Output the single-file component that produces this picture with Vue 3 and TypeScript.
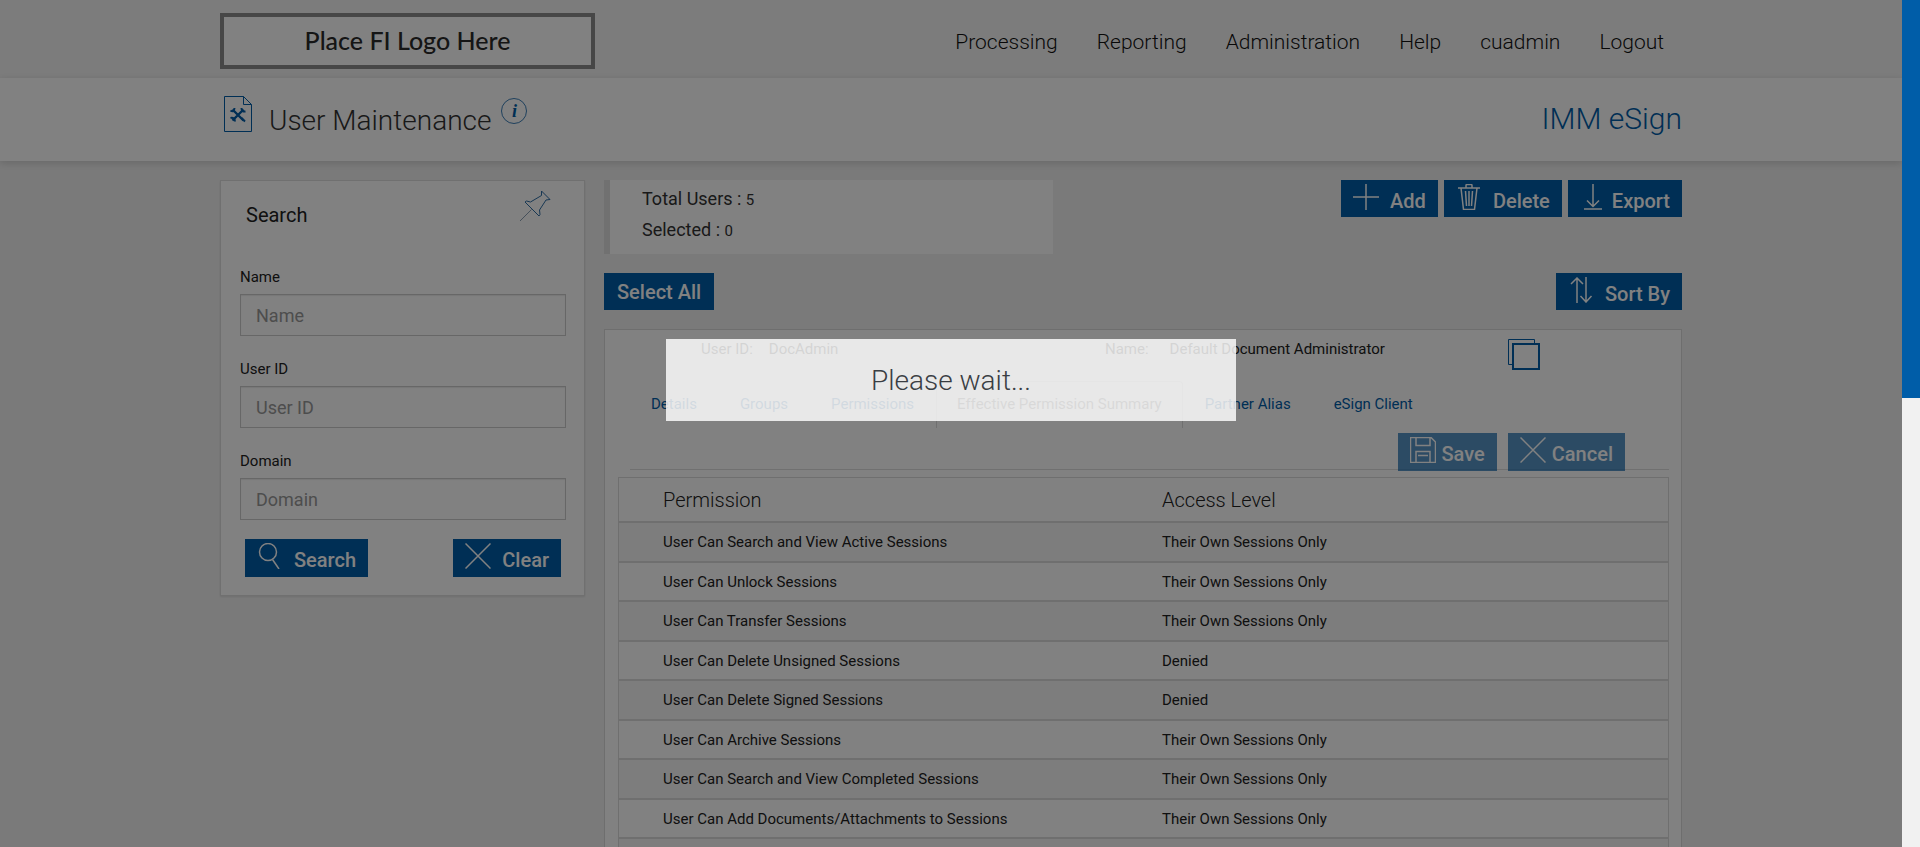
<script setup lang="ts">
import { ref } from 'vue'

interface Field {
  id: string
  label: string
}

interface Permission {
  name: string
  access: string
}

const navItems: string[] = ['Processing', 'Reporting', 'Administration', 'Help', 'cuadmin', 'Logout']

const fields: Field[] = [
  { id: 'name', label: 'Name' },
  { id: 'user-id', label: 'User ID' },
  { id: 'domain', label: 'Domain' },
]

const criteria = ref<Record<string, string>>({ name: '', 'user-id': '', domain: '' })

const tabs: string[] = [
  'Details',
  'Groups',
  'Permissions',
  'Effective Permission Summary',
  'Partner Alias',
  'eSign Client',
]
const activeTab = ref('Effective Permission Summary')

const own = 'Their Own Sessions Only'
const permissions: Permission[] = [
  { name: 'User Can Search and View Active Sessions', access: own },
  { name: 'User Can Unlock Sessions', access: own },
  { name: 'User Can Transfer Sessions', access: own },
  { name: 'User Can Delete Unsigned Sessions', access: 'Denied' },
  { name: 'User Can Delete Signed Sessions', access: 'Denied' },
  { name: 'User Can Archive Sessions', access: own },
  { name: 'User Can Search and View Completed Sessions', access: own },
  { name: 'User Can Add Documents/Attachments to Sessions', access: own },
  { name: '', access: '' },
]

function clearSearch(): void {
  criteria.value = { name: '', 'user-id': '', domain: '' }
}
</script>

<template>
  <div class="window">
    <div class="page">
      <header class="topbar">
        <div class="container topbar-inner">
          <div class="logo">Place FI Logo Here</div>
          <nav class="nav">
            <a v-for="item in navItems" :key="item" href="#">{{ item }}</a>
          </nav>
        </div>
      </header>

      <div class="titlebar">
        <div class="container titlebar-inner">
          <svg class="doc-icon" width="30" height="38" viewBox="0 0 30 38" fill="none" stroke="#005da8">
            <path d="M1.500 1.500H20.500L28.500 9.500V36.500H1.500Z M20.500 1.500V9.500H28.500" />
            <path d="M9.500 14.500L20.500 25.500M20.500 14.500L9.500 25.500" stroke-width="2.400" />
            <path d="M7.500 15.500Q11 18 11.500 13M18.500 13Q18.500 17 22.500 16.500M7.500 23Q11.500 22 12 26.500M18.500 23L22 26.500" stroke-width="2" />
          </svg>
          <h1>User Maintenance</h1>
          <button class="info" type="button" aria-label="Information"><i>i</i></button>
          <span class="product">IMM eSign</span>
        </div>
      </div>

      <main class="container content">
        <form class="search-card" @submit.prevent>
          <div class="search-head">
            <h2>Search</h2>
            <button class="icon-button" type="button" aria-label="Pin search">
              <svg width="32" height="32" viewBox="0 0 32 32" fill="none" stroke="#2f6ea5">
                <path d="M22.500 1L31 9.500L27 10L20.500 20L21 24.500L20 26L6 12L7.500 11L11.500 12L22.500 5.500Z" />
                <path d="M12.500 19.500L1 31" stroke="#8a9fb3" />
              </svg>
            </button>
          </div>
          <div v-for="field in fields" :key="field.id" class="field">
            <label :for="field.id">{{ field.label }}</label>
            <input :id="field.id" v-model="criteria[field.id]" type="text" :placeholder="field.label" />
          </div>
          <div class="search-actions">
            <button class="btn tall" type="submit">
              <svg viewBox="0 0 26 26"><circle cx="11" cy="9" r="8.500" /><path d="M15.500 16.500L22 26" /></svg>
              <span>Search</span>
            </button>
            <button class="btn tall" type="button" @click="clearSearch">
              <svg viewBox="0 0 26 26"><path d="M.5.5L25.500 25.500M25.500.5L.5 25.500" /></svg>
              <span>Clear</span>
            </button>
          </div>
        </form>

        <section class="users">
          <div class="row">
            <div class="stats">
              <p>Total Users : <span>5</span></p>
              <p>Selected : <span>0</span></p>
            </div>
            <div class="group">
              <button class="btn" type="button">
                <svg viewBox="0 0 26 26"><path d="M13 0V26M0 13H26" /></svg>
                <span>Add</span>
              </button>
              <button class="btn" type="button">
                <svg viewBox="0 0 26 26">
                  <path d="M2 4H24M5 4L7.500 25.500H18.500L21 4M10 4V1.500Q10 .5 11 .5H15Q16 .5 16 1.500V4M9.500 7L10.500 22M13 7V22M16.500 7L15.500 22" />
                </svg>
                <span>Delete</span>
              </button>
              <button class="btn tight" type="button">
                <svg viewBox="0 0 26 26"><path d="M13 0V22M7 16.500L13 22.500L19 16.500M4 25H22" /></svg>
                <span>Export</span>
              </button>
            </div>
          </div>

          <div class="row">
            <button class="btn plain" type="button"><span>Select All</span></button>
            <button class="btn" type="button">
              <svg viewBox="0 0 26 26"><path d="M9 26V1M3 7L9 1L15 7M18 0V25M12.500 19L18 25L23.500 19" /></svg>
              <span>Sort By</span>
            </button>
          </div>

          <article class="user-card">
            <div class="identity">
              <p><span>User ID:</span><span>DocAdmin</span></p>
              <p><span>Name:</span><span>Default Document Administrator</span></p>
              <button class="icon-button" type="button" aria-label="Copy user">
                <svg width="32" height="32" viewBox="0 0 32 32" fill="none" stroke="#005da8">
                  <path d="M26.500 4V.5H.5V25.500H4" />
                  <path d="M5 5H31V30H5Z" stroke-width="2" />
                </svg>
              </button>
            </div>

            <div class="tabs" role="tablist">
              <button
                v-for="tab in tabs"
                :key="tab"
                type="button"
                role="tab"
                :aria-selected="tab === activeTab"
                :class="{ active: tab === activeTab }"
                @click="activeTab = tab"
              >
                {{ tab }}
              </button>
            </div>

            <div class="form-actions">
              <button class="btn tall tight" type="button" disabled>
                <svg viewBox="0 0 26 26">
                  <path d="M.5.5H21L25.500 5V25.500H.5ZM6 .5V8.500H20V.5M6 25.500V14.500H20V25.500M8 18.500H18" />
                </svg>
                <span>Save</span>
              </button>
              <button class="btn tall tight" type="button" disabled>
                <svg viewBox="0 0 26 26"><path d="M.5.5L25.500 25.500M25.500.5L.5 25.500" /></svg>
                <span>Cancel</span>
              </button>
            </div>

            <table>
              <thead>
                <tr>
                  <th>Permission</th>
                  <th>Access Level</th>
                </tr>
              </thead>
              <tbody>
                <tr v-for="(row, index) in permissions" :key="index">
                  <td>{{ row.name }}</td>
                  <td>{{ row.access }}</td>
                </tr>
              </tbody>
            </table>
          </article>
        </section>
      </main>

      <div class="overlay"></div>
      <div class="wait" role="alert">Please wait...</div>
    </div>
    <div class="scrollbar"><div class="thumb"></div></div>
  </div>
</template>

<style>
body {
  margin: 0;
}
</style>

<style scoped>
* {
  box-sizing: border-box;
}

.window {
  display: flex;
  height: 100vh;
  overflow: hidden;
  font-family: Roboto, "Liberation Sans", sans-serif;
  font-size: 15px;
  color: #212121;
}

.page {
  position: relative;
  flex: 1;
  min-width: 0;
  overflow: hidden;
  background: #f2f2f2;
}

.scrollbar {
  width: 18px;
  background: #f1f1f1;
}

.thumb {
  height: 47%;
  background: #005da8;
}

.container {
  max-width: 1462px;
  margin: 0 auto;
}

h1,
h2,
p {
  margin: 0;
}

button {
  font-family: inherit;
  cursor: pointer;
}

.topbar {
  background: #f6f6f6;
}

.topbar-inner {
  display: flex;
  justify-content: space-between;
  align-items: flex-start;
  height: 78px;
  padding-top: 13px;
}

.logo {
  width: 375px;
  height: 56px;
  border: 4px solid #8c8c8c;
  background: #fff;
  font-family: Lato, sans-serif;
  font-size: 25px;
  font-weight: 500;
  line-height: 46px;
  text-align: center;
  color: #2b2b2b;
}

.nav {
  display: flex;
  gap: 39px;
  padding: 14px 18px 0 0;
}

.nav a {
  font-size: 21px;
  font-weight: 300;
  line-height: 30px;
  color: #111;
  text-decoration: none;
}

.titlebar {
  position: relative;
  background: #fff;
  box-shadow: 0 2px 8px rgba(0, 0, 0, 0.16);
}

.titlebar-inner {
  display: flex;
  align-items: flex-start;
  height: 83px;
  padding: 17px 0 0 3px;
}

h1 {
  margin: 7px 10px 0 16px;
  font-size: 28px;
  font-weight: 300;
  line-height: 38px;
  color: #333;
}

.info {
  width: 26px;
  height: 26px;
  margin-top: 3px;
  padding: 0;
  border: 1px solid #3d7fb8;
  border-radius: 50%;
  background: none;
  color: #005da8;
  font-family: "Liberation Serif", serif;
  font-size: 18px;
  font-weight: 700;
  line-height: 22px;
}

.product {
  margin: 4px 0 0 auto;
  font-size: 30px;
  font-weight: 300;
  line-height: 40px;
  color: #005da8;
}

.content {
  display: flex;
  align-items: flex-start;
  gap: 19px;
  padding-top: 19px;
}

.search-card {
  flex: 0 0 365px;
  padding: 9px 18px 18px 19px;
  border: 1px solid #dedede;
  background: #fff;
  box-shadow: 0 1px 2px rgba(0, 0, 0, 0.1);
}

.search-head {
  display: flex;
  justify-content: space-between;
  height: 76px;
  padding: 0 15px 0 6px;
}

h2 {
  padding-top: 11px;
  font-size: 20px;
  font-weight: 400;
  line-height: 28px;
}

.icon-button {
  align-self: flex-start;
  padding: 0;
  border: 0;
  background: none;
}

.icon-button svg {
  display: block;
}

.field {
  display: flex;
  flex-direction: column;
  margin-bottom: 22px;
}

label {
  margin-bottom: 6px;
  font-size: 15px;
  line-height: 22px;
}

input {
  height: 42px;
  padding: 0 15px;
  border: 1px solid #ccc;
  background: #fff;
  box-shadow: inset 0 1px 1px rgba(0, 0, 0, 0.08);
  font: inherit;
  font-size: 18px;
  color: #333;
}

input::placeholder {
  color: #999;
  opacity: 1;
}

.search-actions {
  display: flex;
  justify-content: space-between;
  margin-top: -3px;
  padding: 0 5px;
}

.btn {
  display: flex;
  align-items: flex-start;
  gap: 11px;
  height: 37px;
  padding: 4px 12px 0;
  border: 0;
  background: #005da8;
  color: #fff;
  font-size: 20px;
  font-weight: 500;
  line-height: 34px;
}

.btn svg {
  width: 26px;
  height: 26px;
  fill: none;
  stroke: #fff;
  stroke-width: 1.5px;
}

.tall {
  height: 38px;
}

.tight {
  gap: 6px;
}

.plain {
  padding: 4px 13px 0;
  line-height: 30px;
}

.btn:disabled {
  opacity: 0.65;
}

.users {
  flex: 1;
  min-width: 0;
}

.row {
  display: flex;
  justify-content: space-between;
  align-items: flex-start;
  margin-bottom: 19px;
}

.group {
  display: flex;
  gap: 6px;
}

.stats {
  width: 41.66%;
  height: 74px;
  padding: 4px 32px;
  border-left: 6px solid #e0e0e0;
  background: #fff;
}

.stats p {
  font-size: 18px;
  line-height: 30px;
  color: #333;
}

.stats span {
  font-size: 15px;
}

.user-card {
  padding: 0 12px 0 13px;
  border: 1px solid #dadada;
  background: #fff;
}

.identity {
  display: grid;
  grid-template-columns: 404fr 403fr 161fr;
  height: 51px;
  padding: 9px 0 0 83px;
}

.identity p {
  display: flex;
  gap: 16px;
  line-height: 20px;
}

.identity p:nth-child(2) {
  gap: 21px;
}

.tabs {
  display: flex;
  gap: 1px;
  margin-left: 12px;
}

.tabs button {
  height: 47px;
  padding: 0 20px 2px;
  border: 1px solid transparent;
  border-bottom: 0;
  border-radius: 4px 4px 0 0;
  background: none;
  color: #005da8;
  font-size: 15px;
  line-height: 42px;
}

.tabs .active {
  border-color: #ddd;
  color: #555;
}

.form-actions {
  display: flex;
  justify-content: flex-end;
  align-items: flex-start;
  gap: 11px;
  height: 42px;
  margin-left: 12px;
  padding: 5px 44px 0 0;
  border-bottom: 1px solid #ddd;
}

table {
  width: 100%;
  margin-top: 7px;
  border: 1px solid #dcdcdc;
  border-spacing: 0;
  table-layout: fixed;
}

th,
td {
  height: 40px;
  padding: 0 0 0 44px;
  border-bottom: 2px solid #dcdcdc;
  text-align: left;
}

th {
  height: 45px;
  font-size: 20px;
  font-weight: 300;
}

th:first-child {
  width: 499px;
}

tbody tr:nth-child(odd) {
  background: #f8f8f8;
}

tbody tr:nth-child(even) td {
  height: 39px;
}

.overlay {
  position: absolute;
  inset: 0;
  background: #000;
  opacity: 0.495;
}

.wait {
  position: absolute;
  top: 40%;
  left: 35%;
  width: 30%;
  padding: 22px 20px 20px;
  background: #fff;
  opacity: 0.82;
  font-size: 28px;
  font-weight: 300;
  line-height: 40px;
  text-align: center;
  color: #2b3036;
}
</style>
